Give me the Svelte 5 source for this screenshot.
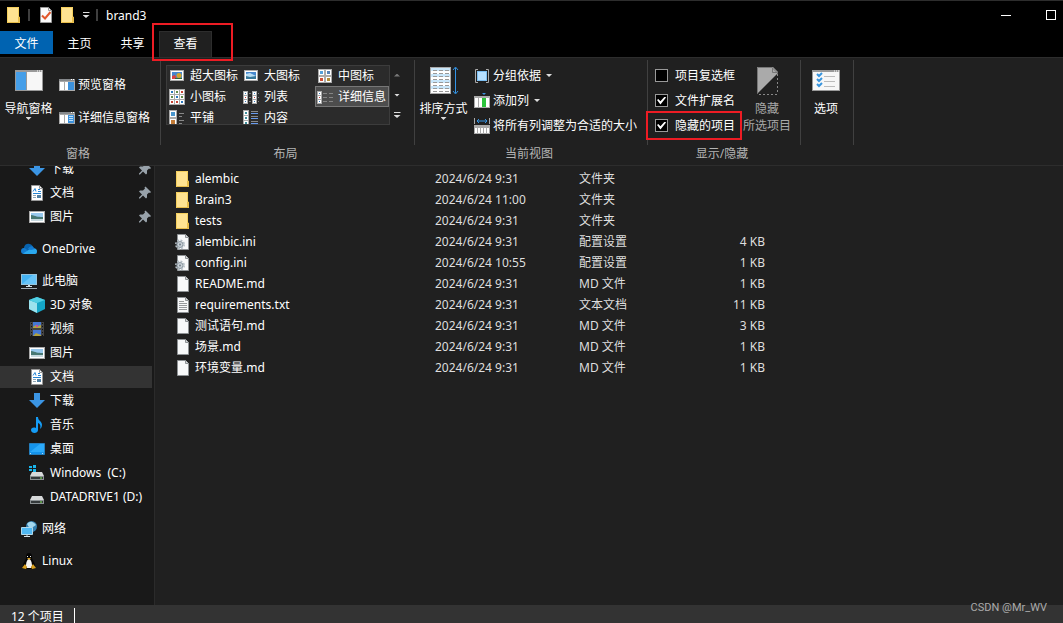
<script>
  let activeTab = $state('查看');
  let layout = $state('详细信息');
  let selected = $state(8);

  const tabs = ['主页', '共享', '查看'];

  const layouts = [
    { label: '超大图标', icon: 'xlarge' },
    { label: '大图标', icon: 'large' },
    { label: '中图标', icon: 'medium' },
    { label: '小图标', icon: 'small' },
    { label: '列表', icon: 'list' },
    { label: '详细信息', icon: 'details' },
    { label: '平铺', icon: 'tiles' },
    { label: '内容', icon: 'content' }
  ];

  let options = $state([
    { label: '项目复选框', checked: false },
    { label: '文件扩展名', checked: true },
    { label: '隐藏的项目', checked: true, marked: true }
  ]);

  const places = [
    { label: '下载', icon: 'download', pinned: true },
    { label: '文档', icon: 'document', pinned: true },
    { label: '图片', icon: 'picture', pinned: true },
    { label: 'OneDrive', icon: 'onedrive', root: true },
    { label: '此电脑', icon: 'computer', root: true },
    { label: '3D 对象', icon: 'cube' },
    { label: '视频', icon: 'video' },
    { label: '图片', icon: 'picture' },
    { label: '文档', icon: 'document' },
    { label: '下载', icon: 'download' },
    { label: '音乐', icon: 'music' },
    { label: '桌面', icon: 'desktop' },
    { label: 'Windows  (C:)', icon: 'windrive' },
    { label: 'DATADRIVE1 (D:)', icon: 'drive' },
    { label: '网络', icon: 'network', root: true },
    { label: 'Linux', icon: 'linux', root: true }
  ];

  const files = [
    { name: 'alembic', icon: 'folder', date: '2024/6/24 9:31', type: '文件夹', size: '' },
    { name: 'Brain3', icon: 'folder', date: '2024/6/24 11:00', type: '文件夹', size: '' },
    { name: 'tests', icon: 'folder', date: '2024/6/24 9:31', type: '文件夹', size: '' },
    { name: 'alembic.ini', icon: 'ini', date: '2024/6/24 9:31', type: '配置设置', size: '4 KB' },
    { name: 'config.ini', icon: 'ini', date: '2024/6/24 10:55', type: '配置设置', size: '1 KB' },
    { name: 'README.md', icon: 'file', date: '2024/6/24 9:31', type: 'MD 文件', size: '1 KB' },
    { name: 'requirements.txt', icon: 'text', date: '2024/6/24 9:31', type: '文本文档', size: '11 KB' },
    { name: '测试语句.md', icon: 'file', date: '2024/6/24 9:31', type: 'MD 文件', size: '3 KB' },
    { name: '场景.md', icon: 'file', date: '2024/6/24 9:31', type: 'MD 文件', size: '1 KB' },
    { name: '环境变量.md', icon: 'file', date: '2024/6/24 9:31', type: 'MD 文件', size: '1 KB' }
  ];
</script>

{#snippet thumb(x, y, s, c)}
  <rect {x} {y} width={s} height={s} fill="#fff" stroke="#aaa" />
  <rect x={x + 1.5} y={y + 1.5} width={s - 3} height={s - 3} fill={c} />
{/snippet}

{#snippet icon(name)}
  <svg width="16" height="16" viewBox="0 0 16 16" fill="none" aria-hidden="true">
    {#if name === 'folder'}
      <path d="M1 0h12v10h1v6H1z" fill="#ffe391" />
      <path d="M1.500 15.500V.5h11v9" stroke="#f5cf5c" />
      <path d="M12.500 15V10h1v5.500H1.500" stroke="#e8bd49" />
    {:else if name === 'file' || name === 'ini' || name === 'text'}
      <path d="M2.500.5h8l3 3v12h-11z" fill="#f8f9fa" stroke="#8e9295" />
      <path d="M10.500.5v3h3" fill="#d5d8da" stroke="#8e9295" />
      {#if name === 'text'}
        <path d="M4 4.500h5M4 6.500h8M4 8.500h8M4 10.500h8M4 12.500h8" stroke="#96999c" />
      {:else if name === 'ini'}
        <circle cx="5" cy="10.500" r="4.200" stroke="#b4bec5" stroke-width="1.600" stroke-dasharray="1.900 1.400" />
        <circle cx="5" cy="10.500" r="3" fill="#c8d0d6" stroke="#8996a0" />
        <circle cx="5" cy="10.500" r="1" fill="#71808a" />
      {/if}
    {:else if name === 'rename'}
      <path d="M2.500.5h8l3 3v12h-11z" fill="#fafafa" stroke="#999" />
      <path d="M10.500.5v3h3" stroke="#999" />
      <path d="M4 8.500l3 3L12.500 5" stroke="#e2572b" stroke-width="2" />
    {:else if name === 'preview' || name === 'detailpane'}
      <rect y="2" width="16" height="12" fill="#aaa" />
      <path d="M1 5h4v8H1zM6 5h3v8H6z" fill="#fff" />
      <path d="M9 5h6v8H9z" fill="#3c91dc" />
      <path d="M0 3h16" stroke="#85888b" stroke-width="2" />
      <path d="M12 2.500h1M14 2.500h1" stroke="#fff" />
      {#if name === 'detailpane'}
        <path d="M10 6.500h4M10 8.500h4M10 10.500h4" stroke="#bde1fb" />
      {/if}
    {:else if name === 'xlarge' || name === 'large'}
      <rect x="1.500" y="2.500" width="13" height="10" fill="#fff" stroke="#aaa" />
      <rect x="3" y="4" width="10" height="7" fill="#4688ce" />
      {#if name === 'xlarge'}
        <path d="M3 11V8l3-1 2 4z" fill="#d84443" />
        <circle cx="10" cy="7.500" r="2.500" fill="#d2a62c" />
        <path d="M6 10h7v1H6z" fill="#2f6a36" />
      {:else}
        <path d="M3 9V6l4-1 6 3v1z" fill="#b8def5" />
        <path d="M3 11V8l4 1 6-1v3z" fill="#36789b" />
      {/if}
    {:else if name === 'medium'}
      {@render thumb(1.5, 1.5, 6, '#54a1dc')}
      {@render thumb(8.5, 1.5, 6, '#5482b8')}
      {@render thumb(1.5, 8.5, 6, '#d04f35')}
      {@render thumb(8.5, 8.5, 6, '#b28c35')}
    {:else if name === 'small'}
      <rect width="16" height="16" fill="#aaa" />
      <path d="M1 1h4v4H1zM6 1h4v4H6zM11 1h4v4h-4zM1 6h4v4H1zM6 6h4v4H6zM11 6h4v4h-4zM1 11h4v4H1zM6 11h4v4H6zM11 11h4v4h-4z" fill="#fff" />
      <path d="M2 3h2M7 8h2M12 13h2" stroke="#2c78bd" stroke-width="2" />
      <path d="M7 3h2M2 8h2M12 8h2" stroke="#628c4a" stroke-width="2" />
      <path d="M12 3h2M2 13h2M7 13h2" stroke="#c84435" stroke-width="2" />
    {:else if name === 'list'}
      {#each [0, 9] as x}
        <rect {x} y="2" width="5" height="13" fill="#aaa" />
        <path d="M{x + 1} 3h3v3h-3zM{x + 1} 7h3v3h-3zM{x + 1} 11h3v3h-3z" fill="#fff" />
        <path d="M{x + 2} 4.500h1M{x + 2} 12.500h1" stroke="#3779b8" />
        <path d="M{x + 2} 8.500h1" stroke="#c63d36" />
        <path d="M{x + 6} 4.500h2M{x + 6} 8.500h2M{x + 6} 12.500h2" stroke="#808080" />
      {/each}
    {:else if name === 'details'}
      <rect y="2" width="5" height="13" fill="#aaa" />
      <path d="M1 3h3v3H1zM1 7h3v3H1zM1 11h3v3H1z" fill="#fff" />
      <path d="M2 4.500h1M2 12.500h1" stroke="#357bbd" />
      <path d="M2 8.500h1" stroke="#c63d36" />
      <path d="M6 4.500h4M12 4.500h4M6 8.500h4M12 8.500h4M6 12.500h4M12 12.500h4" stroke="#858585" />
    {:else if name === 'tiles'}
      {@render thumb(0.5, 0.5, 7, '#4996cd')}
      {@render thumb(0.5, 8.5, 7, '#c37b36')}
      <path d="M10 3.500h5M10 6.500h3M10 10.500h5M10 13.500h3" stroke="#888" />
    {:else if name === 'content'}
      <rect width="6" height="16" fill="#aaa" />
      <path d="M1 1h4v4H1zM1 6h4v4H1zM1 11h4v4H1z" fill="#fff" />
      <path d="M2 3h2M2 8h2M2 13h2" stroke="#3e8e9c" stroke-width="2" />
      <path d="M8 1.500h7M8 6.500h7M8 11.500h7" stroke="#888" />
      <path d="M8 3.500h7M8 8.500h7M8 13.500h7" stroke="#689bed" />
    {:else if name === 'group'}
      <path d="M4 1.500H1.500v13H4M12 1.500h2.500v13H12" stroke="#aaa" />
      <rect x="3.500" y="3.500" width="9" height="9" fill="#b7e0ff" stroke="#7dbff2" />
    {:else if name === 'addcolumn'}
      <rect y="3" width="16" height="12" fill="#aaa" />
      <path d="M1 5h3v9H1zM5 5h3v9H5zM12 5h3v9h-3z" fill="#fff" />
      <path d="M8 5h4v9H8z" fill="#2cc33c" />
      <path d="M8 0h4l-2 2z" fill="#3c91dc" />
    {:else if name === 'fit'}
      <path d="M.5 0v6M15.500 0v6" stroke="#aaa" />
      <path d="M3 3h10M5 1L3 3l2 2M11 1l2 2-2 2" stroke="#3794e3" />
      <path d="M0 7h16v9H0z" fill="#aaa" />
      <path d="M1 10h2v5H1zM4 10h2v5H4zM7 10h2v5H7zM10 10h2v5h-2zM13 10h2v5h-2z" fill="#fff" />
    {:else if name === 'download'}
      <path d="M5 0h6v7h5l-8 8-8-8h5z" fill="#3b95e4" />
    {:else if name === 'document'}
      <path d="M2.500.5h8l3 3v12h-11z" fill="#fff" stroke="#999" />
      <path d="M10.500.5v3h3" stroke="#999" />
      <path d="M4 6.500l2-3 1 3M9 4.500h2M9 6.500h3M4 8.500h8" stroke="#2384d4" />
      <path d="M4 10.500h3M4 12.500h3" stroke="#8fa5b3" />
      <path d="M8 10h4v3H8z" fill="#4f7fa3" />
    {:else if name === 'picture'}
      <rect x=".5" y="2.500" width="15" height="11" fill="#fff" stroke="#aaa" />
      <path d="M2 4h12v8H2z" fill="#97c8ed" />
      <path d="M2 6c5 1 6 2 12 2v2H2z" fill="#477873" />
      <path d="M2 10h12v2H2z" fill="#c7d9df" />
    {:else if name === 'onedrive'}
      <path d="M3 7c0-5 7-6 9-1l-2 4H2z" fill="#0863ae" />
      <path d="M0 10c0-3 3-4 5-2l5 5H3c-2 0-3-1-3-3z" fill="#137bd0" />
      <path d="M2 12.500L9 8c5-2 7 0 7 2 0 3-1 3-3 3H4z" fill="#2aa8ee" />
      <path d="M7 8c1-3 5-4 6-1l1 1-4 1z" fill="#137bd0" />
    {:else if name === 'computer'}
      <rect x=".5" y="1.500" width="15" height="10" fill="#45b4f4" stroke="#94c3dc" />
      <path d="M1 11L12 2h3v9z" fill="#67c4f8" />
      <path d="M7 12h2v1H7zM5 13h6v1H5z" fill="#d2e1e8" />
      <path d="M0 15.500h16" stroke="#9facb4" />
    {:else if name === 'cube'}
      <path d="M0 3l8-3 8 3v9l-8 4-8-4z" fill="#14a5c6" />
      <path d="M0 3l8 3v10l-8-4z" fill="#9ce2ed" />
      <path d="M0 3l8-3 8 3-8 3z" fill="#52cfe3" />
    {:else if name === 'video'}
      <path d="M1 1h14v14H1z" fill="#444" />
      <path d="M4 1h8v6H4zM4 9h8v6H4z" fill="#4678d2" />
      <path d="M4 6l3-2 2 1 3-1v3H4zM4 15l3-3 5 2v1z" fill="#b3a23d" />
      <path d="M7 4h2v2H7z" fill="#c94f9a" />
      <path d="M2.500 2v13M13.500 2v13" stroke="#111" stroke-dasharray="1 2" />
    {:else if name === 'music'}
      <path d="M7 0h2c0 4 4 4 4 8 0 2-1 3-2 4 1-4 0-5-2-6v7c0 4-7 4-7 0 0-2 2-3 5-2z" fill="#159cf5" />
    {:else if name === 'desktop'}
      <path d="M.5 2.500h15v11H.5z" fill="#1494ec" stroke="#247ebd" />
      <path d="M1 11L11 3h4v8z" fill="#2baafa" />
      <path d="M1 12.500h14" stroke="#b7d9f0" stroke-dasharray="1 11" />
    {:else if name === 'drive' || name === 'windrive'}
      <path d="M3 7h10l2 4H1z" fill="#d7d9da" />
      <path d="M1 11h14v4H1z" fill="#8b9093" />
      <path d="M2 12h12v2H2z" fill="#34393b" />
      <path d="M11 13h2" stroke="#7eed57" />
      {#if name === 'windrive'}
        <path d="M0 1h3v2H0zM4 0h3v3H4zM0 4h3v2H0zM4 4h3v3H4z" fill="#19b5ec" />
      {/if}
    {:else if name === 'network'}
      <circle cx="10.500" cy="5.500" r="5.500" fill="#357fae" />
      <path d="M6 3c3-4 7-2 9 1L9 8z" fill="#a3d8ef" />
      <path d="M.5 6.500h11v7H.5z" fill="#50b8f2" stroke="#b1d8eb" />
      <path d="M6 14v1M3 15.500h6" stroke="#d6e3e8" />
    {:else if name === 'linux'}
      <path d="M8 0c3 0 3 3 3 5s3 4 3 7l-3 4H5l-3-4c0-3 3-5 3-7s0-5 3-5z" fill="#050505" />
      <path d="M8 6c2 0 3 4 3 7l-1 2H6l-1-2c0-3 1-7 3-7z" fill="#f3f3f3" />
      <path d="M6 3h1v1H6zM9 3h1v1H9z" fill="#eee" />
      <path d="M6 5h4L8 7zM4 11l2 3-1 2-4-1zM12 11l-2 3 1 2 4-1z" fill="#d9a01f" />
    {:else if name === 'pin'}
      <path d="M10 3l4 4-1 1-1-.5-2 2v3l-1 1-3-3-3 3H2v-1l3-3-3-3 1-1h3l2-2-.5-1 1-1z" transform="translate(1 0)" fill="#98a2aa" />
    {/if}
  </svg>
{/snippet}

{#snippet bigIcon(name)}
  <svg width="32" height="32" viewBox="0 0 32 32" fill="none" aria-hidden="true">
    {#if name === 'navpane'}
      <path d="M2 5h28v21H2z" fill="#999" />
      <path d="M3 7h10v18H3z" fill="#459ee8" />
      <path d="M14 7h15v18H14z" fill="#f7f7f7" />
      <path d="M24 6h1M26 6h1M28 6h1" stroke="#fff" />
    {:else if name === 'sort'}
      <rect x="2.500" y="2.500" width="20" height="26" fill="#fff" stroke="#aaa" />
      <path d="M3 3h19v3H3zM3 9h19v3H3zM3 15h19v3H3zM3 21h19v3H3z" fill="#c8e6fa" />
      <path d="M5 5.500h16M5 8.500h16M5 11.500h16M5 14.500h16M5 17.500h16M5 20.500h16M5 23.500h16M5 26.500h16" stroke="#999" stroke-dasharray="4 2" />
      <path d="M27.500 3v25M25 5l2.500-3L30 5M25 26l2.500 3 2.500-3" stroke="#3394e6" />
    {:else if name === 'hide'}
      <path d="M6 2h16l5 5v1L6 29z" fill="#aaa" />
      <path d="M6.500 28V2.500H21l5 5M21.500 2.500v5H27" stroke="#777" />
      <path d="M26.500 9v20M26 29.500H6" stroke="#888" stroke-dasharray="2 2" />
    {:else if name === 'options'}
      <path d="M2 5h28v21H2z" fill="#999" />
      <path d="M3 7h26v18H3z" fill="#f7f7f7" />
      <path d="M24 6h1M26 6h1M28 6h1" stroke="#fff" />
      <path d="M7 9l2 2 3-3M7 14l2 2 3-3M7 19l2 2 3-3" stroke="#3794dd" stroke-width="2" />
      <path d="M14 11.500h11M14 16.500h11M14 21.500h11" stroke="#bbb" />
    {/if}
  </svg>
{/snippet}

<div class="window">
  <header class="titlebar">
    {@render icon('folder')}
    <span class="divider"></span>
    <button class="quick" aria-label="属性">{@render icon('rename')}</button>
    <button class="quick" aria-label="新建文件夹">{@render icon('folder')}</button>
    <button class="quick more" aria-label="自定义快速访问工具栏"><i class="arrow barred"></i></button>
    <span class="divider"></span>
    <h1>brand3</h1>
    <div class="controls">
      <button aria-label="最小化"><span class="minimize"></span></button>
      <button aria-label="最大化"><span class="maximize"></span></button>
    </div>
  </header>

  <nav class="tabs">
    <button class="tab file-tab">文件</button>
    {#each tabs as tab}
      <button class="tab" class:active={tab === activeTab} onclick={() => (activeTab = tab)}>
        {tab}
        {#if tab === '查看'}<span class="mark tab-mark"></span>{/if}
      </button>
    {/each}
  </nav>

  <div class="ribbon">
    <section class="group">
      <div class="tools">
        <button class="big">
          {@render bigIcon('navpane')}
          <span>导航窗格</span>
          <i class="arrow"></i>
        </button>
        <div class="stack spaced">
          <button class="tool">{@render icon('preview')}预览窗格</button>
          <button class="tool">{@render icon('detailpane')}详细信息窗格</button>
        </div>
      </div>
      <h2>窗格</h2>
    </section>

    <section class="group">
      <div class="tools layouts">
        <div class="gallery">
          {#each layouts as l}
            <button class:chosen={l.label === layout} onclick={() => (layout = l.label)}>
              {@render icon(l.icon)}{l.label}
            </button>
          {/each}
        </div>
        <div class="scroller">
          <button aria-label="向上" disabled><i class="arrow up"></i></button>
          <button aria-label="向下"><i class="arrow"></i></button>
          <button aria-label="更多"><i class="arrow barred"></i></button>
        </div>
      </div>
      <h2>布局</h2>
    </section>

    <section class="group">
      <div class="tools">
        <button class="big">
          {@render bigIcon('sort')}
          <span>排序方式</span>
          <i class="arrow"></i>
        </button>
        <div class="stack">
          <button class="tool">{@render icon('group')}分组依据<i class="arrow"></i></button>
          <button class="tool">{@render icon('addcolumn')}添加列<i class="arrow"></i></button>
          <button class="tool">{@render icon('fit')}将所有列调整为合适的大小</button>
        </div>
      </div>
      <h2>当前视图</h2>
    </section>

    <section class="group">
      <div class="tools">
        <div class="stack checks">
          {#each options as o}
            <label>
              <input type="checkbox" bind:checked={o.checked} />
              {o.label}
              {#if o.marked}<span class="mark item-mark"></span>{/if}
            </label>
          {/each}
        </div>
        <button class="big narrow" disabled>
          {@render bigIcon('hide')}
          <span>隐藏<br />所选项目</span>
        </button>
      </div>
      <h2>显示/隐藏</h2>
    </section>

    <section class="group">
      <div class="tools single">
        <button class="big narrow">
          {@render bigIcon('options')}
          <span>选项</span>
        </button>
      </div>
    </section>
  </div>

  <div class="body">
    <aside>
      <ul>
        {#each places as p, i}
          <li class:root={p.root}>
            <button class:current={i === selected} onclick={() => (selected = i)}>
              {@render icon(p.icon)}
              <span>{p.label}</span>
              {#if p.pinned}{@render icon('pin')}{/if}
            </button>
          </li>
        {/each}
      </ul>
    </aside>

    <main>
      <table>
        <tbody>
          {#each files as f (f.name)}
            <tr>
              <td class="name"><div>{@render icon(f.icon)}{f.name}</div></td>
              <td class="date">{f.date}</td>
              <td class="type">{f.type}</td>
              <td class="size">{f.size}</td>
            </tr>
          {/each}
        </tbody>
      </table>
    </main>
  </div>

  <footer>
    <span class="count">12 个项目</span>
  </footer>
  <span class="watermark">CSDN @Mr_WV</span>
</div>

<style>
  :global(body) {
    background: #202020;
  }

  .window,
  .window * {
    box-sizing: border-box;
  }

  .window {
    position: relative;
    display: flex;
    flex-direction: column;
    height: 100vh;
    overflow: hidden;
    background: #202020;
    color: #fff;
    font: 12px/17px "Noto Sans", "Noto Sans CJK SC", sans-serif;
  }

  button {
    padding: 0;
    border: 0;
    background: none;
    color: inherit;
    font: inherit;
    white-space: nowrap;
  }

  svg {
    display: block;
    flex: none;
  }

  h1,
  h2,
  ul {
    margin: 0;
    padding: 0;
    font-size: 12px;
    font-weight: 400;
  }

  .arrow {
    width: 6px;
    height: 3px;
    flex: none;
    background: #ddd;
    clip-path: polygon(0 0, 100% 0, 50% 100%);
  }

  .arrow.up {
    background: #777;
    clip-path: polygon(0 100%, 100% 100%, 50% 0);
  }

  .arrow.barred {
    width: 7px;
    height: 6px;
    clip-path: polygon(0 0, 100% 0, 100% 1px, 0 1px, 0 3px, 100% 3px, 50% 100%, 0 3px);
  }

  .mark {
    position: absolute;
    border: 2px solid #ed1c24;
    pointer-events: none;
    z-index: 1;
  }

  .titlebar {
    display: flex;
    align-items: center;
    flex: none;
    height: 31px;
    padding: 0 0 2px 6px;
    border-top: 1px solid #2d2d2d;
    background: #000;
  }

  .divider {
    width: 2px;
    height: 12px;
    margin: 0 8px 0 6px;
    background: #3f3f3f;
  }

  .quick {
    width: 22px;
  }

  .quick.more {
    display: flex;
    justify-content: center;
    width: 8px;
  }

  .controls {
    display: flex;
    align-self: stretch;
    margin-left: auto;
    margin-right: -10px;
  }

  .controls button {
    display: flex;
    align-items: center;
    justify-content: center;
    width: 45px;
  }

  .minimize {
    width: 10px;
    height: 1px;
    background: #fff;
  }

  .maximize {
    width: 10px;
    height: 10px;
    border: 1px solid #fff;
  }

  .tabs {
    display: flex;
    flex: none;
    height: 26px;
    background: #000;
  }

  .tab {
    position: relative;
    width: 53px;
    padding-bottom: 2px;
    border: 1px solid transparent;
    border-bottom: 0;
  }

  .tab.file-tab {
    height: 23px;
    padding: 0;
    background: #0063b1;
  }

  .tab.active {
    border-color: #2d2d2d;
    background: #202020;
  }

  .tab-mark {
    inset: -9px -22px -4px -8px;
  }

  .ribbon {
    display: flex;
    flex: none;
    height: 109px;
    padding-top: 2px;
    border-top: 1px solid #2d2d2d;
    border-bottom: 1px solid #2d2d2d;
  }

  .group h2 {
    padding-right: 5px;
    color: #b4b4b4;
    text-align: center;
  }

  .tools {
    display: flex;
    height: 85px;
    padding-right: 8px;
    border-right: 1px solid #404040;
  }

  .tools.single {
    padding: 0 2px 0 0;
  }

  .big {
    display: flex;
    flex-direction: column;
    align-items: center;
    width: 57px;
    padding-top: 5px;
  }

  .big.narrow {
    width: 50px;
  }

  .big svg {
    margin-bottom: 3px;
  }

  .big:disabled {
    color: #a8a8a8;
  }

  .stack {
    padding-top: 3px;
  }

  .stack.spaced {
    display: grid;
    align-content: start;
    gap: 8px;
    padding-top: 12px;
  }

  .tool,
  .checks label {
    display: flex;
    align-items: center;
    gap: 3px;
    height: 25px;
    padding: 0 2px;
  }

  .tool .arrow {
    margin-left: 2px;
  }

  .layouts {
    padding-left: 5px;
    padding-top: 5px;
  }

  .gallery {
    display: grid;
    grid-template-columns: repeat(3, 74px);
    grid-auto-rows: 21px;
    height: 60px;
    padding: 0 1px;
    overflow: hidden;
    outline: 1px solid #3c3c3c;
    outline-offset: -1px;
    background: #2b2b2b;
  }

  .gallery button {
    display: flex;
    align-items: center;
    gap: 5px;
    padding-left: 2px;
  }

  .gallery .chosen {
    padding-left: 1px;
    border: 1px solid #777;
    background: #4d4d4d;
  }

  .scroller {
    display: grid;
    grid-auto-rows: 20px;
    width: 16px;
  }

  .scroller button {
    display: grid;
    place-items: center;
    padding-right: 2px;
  }

  .checks label {
    position: relative;
    gap: 7px;
    padding: 0 7px;
    white-space: nowrap;
  }

  .item-mark {
    inset: -2px 0 -2px -2px;
  }

  input {
    appearance: none;
    display: grid;
    place-items: center;
    width: 13px;
    height: 13px;
    margin: 0;
    border: 1px solid #999;
    background: #000;
  }

  input:checked::before {
    content: "";
    width: 9px;
    height: 8px;
    background: #fff;
    clip-path: polygon(0 45%, 14% 30%, 38% 58%, 86% 0, 100% 14%, 38% 100%);
  }

  .body {
    display: flex;
    flex: 1;
    min-height: 0;
  }

  aside {
    flex: none;
    width: 155px;
    padding-right: 2px;
    border-right: 1px solid #2b2b2b;
    background: #191919;
    overflow: hidden;
  }

  ul {
    margin-top: -9px;
    list-style: none;
  }

  li {
    padding: 1px 0;
  }

  li.root {
    margin-top: 8px;
  }

  li button {
    display: flex;
    align-items: center;
    gap: 5px;
    width: 100%;
    height: 22px;
    padding: 0 0 1px 29px;
    white-space: pre;
  }

  li.root button {
    padding-left: 21px;
  }

  li button.current {
    background: #333;
  }

  li span + :global(svg) {
    margin-left: auto;
  }

  main {
    flex: 1;
    min-width: 0;
    padding: 2px 0 0 20px;
  }

  table {
    border-collapse: collapse;
    table-layout: fixed;
    width: 590px;
  }

  td {
    height: 21px;
    padding: 0;
    color: #dedede;
    white-space: nowrap;
  }

  .name {
    width: 260px;
    color: #fff;
  }

  .name div {
    display: flex;
    align-items: center;
    gap: 4px;
  }

  .date {
    width: 144px;
  }

  .type {
    width: 100px;
  }

  .size {
    text-align: right;
  }

  footer {
    flex: none;
    height: 18px;
    padding: 3px 11px 0;
    background: #333;
  }

  .count {
    padding-right: 10px;
    border-right: 1px solid #fff;
  }

  .watermark {
    position: absolute;
    right: 16px;
    bottom: 7px;
    color: #aaa;
    font: 11px/17px Roboto, sans-serif;
  }
</style>
